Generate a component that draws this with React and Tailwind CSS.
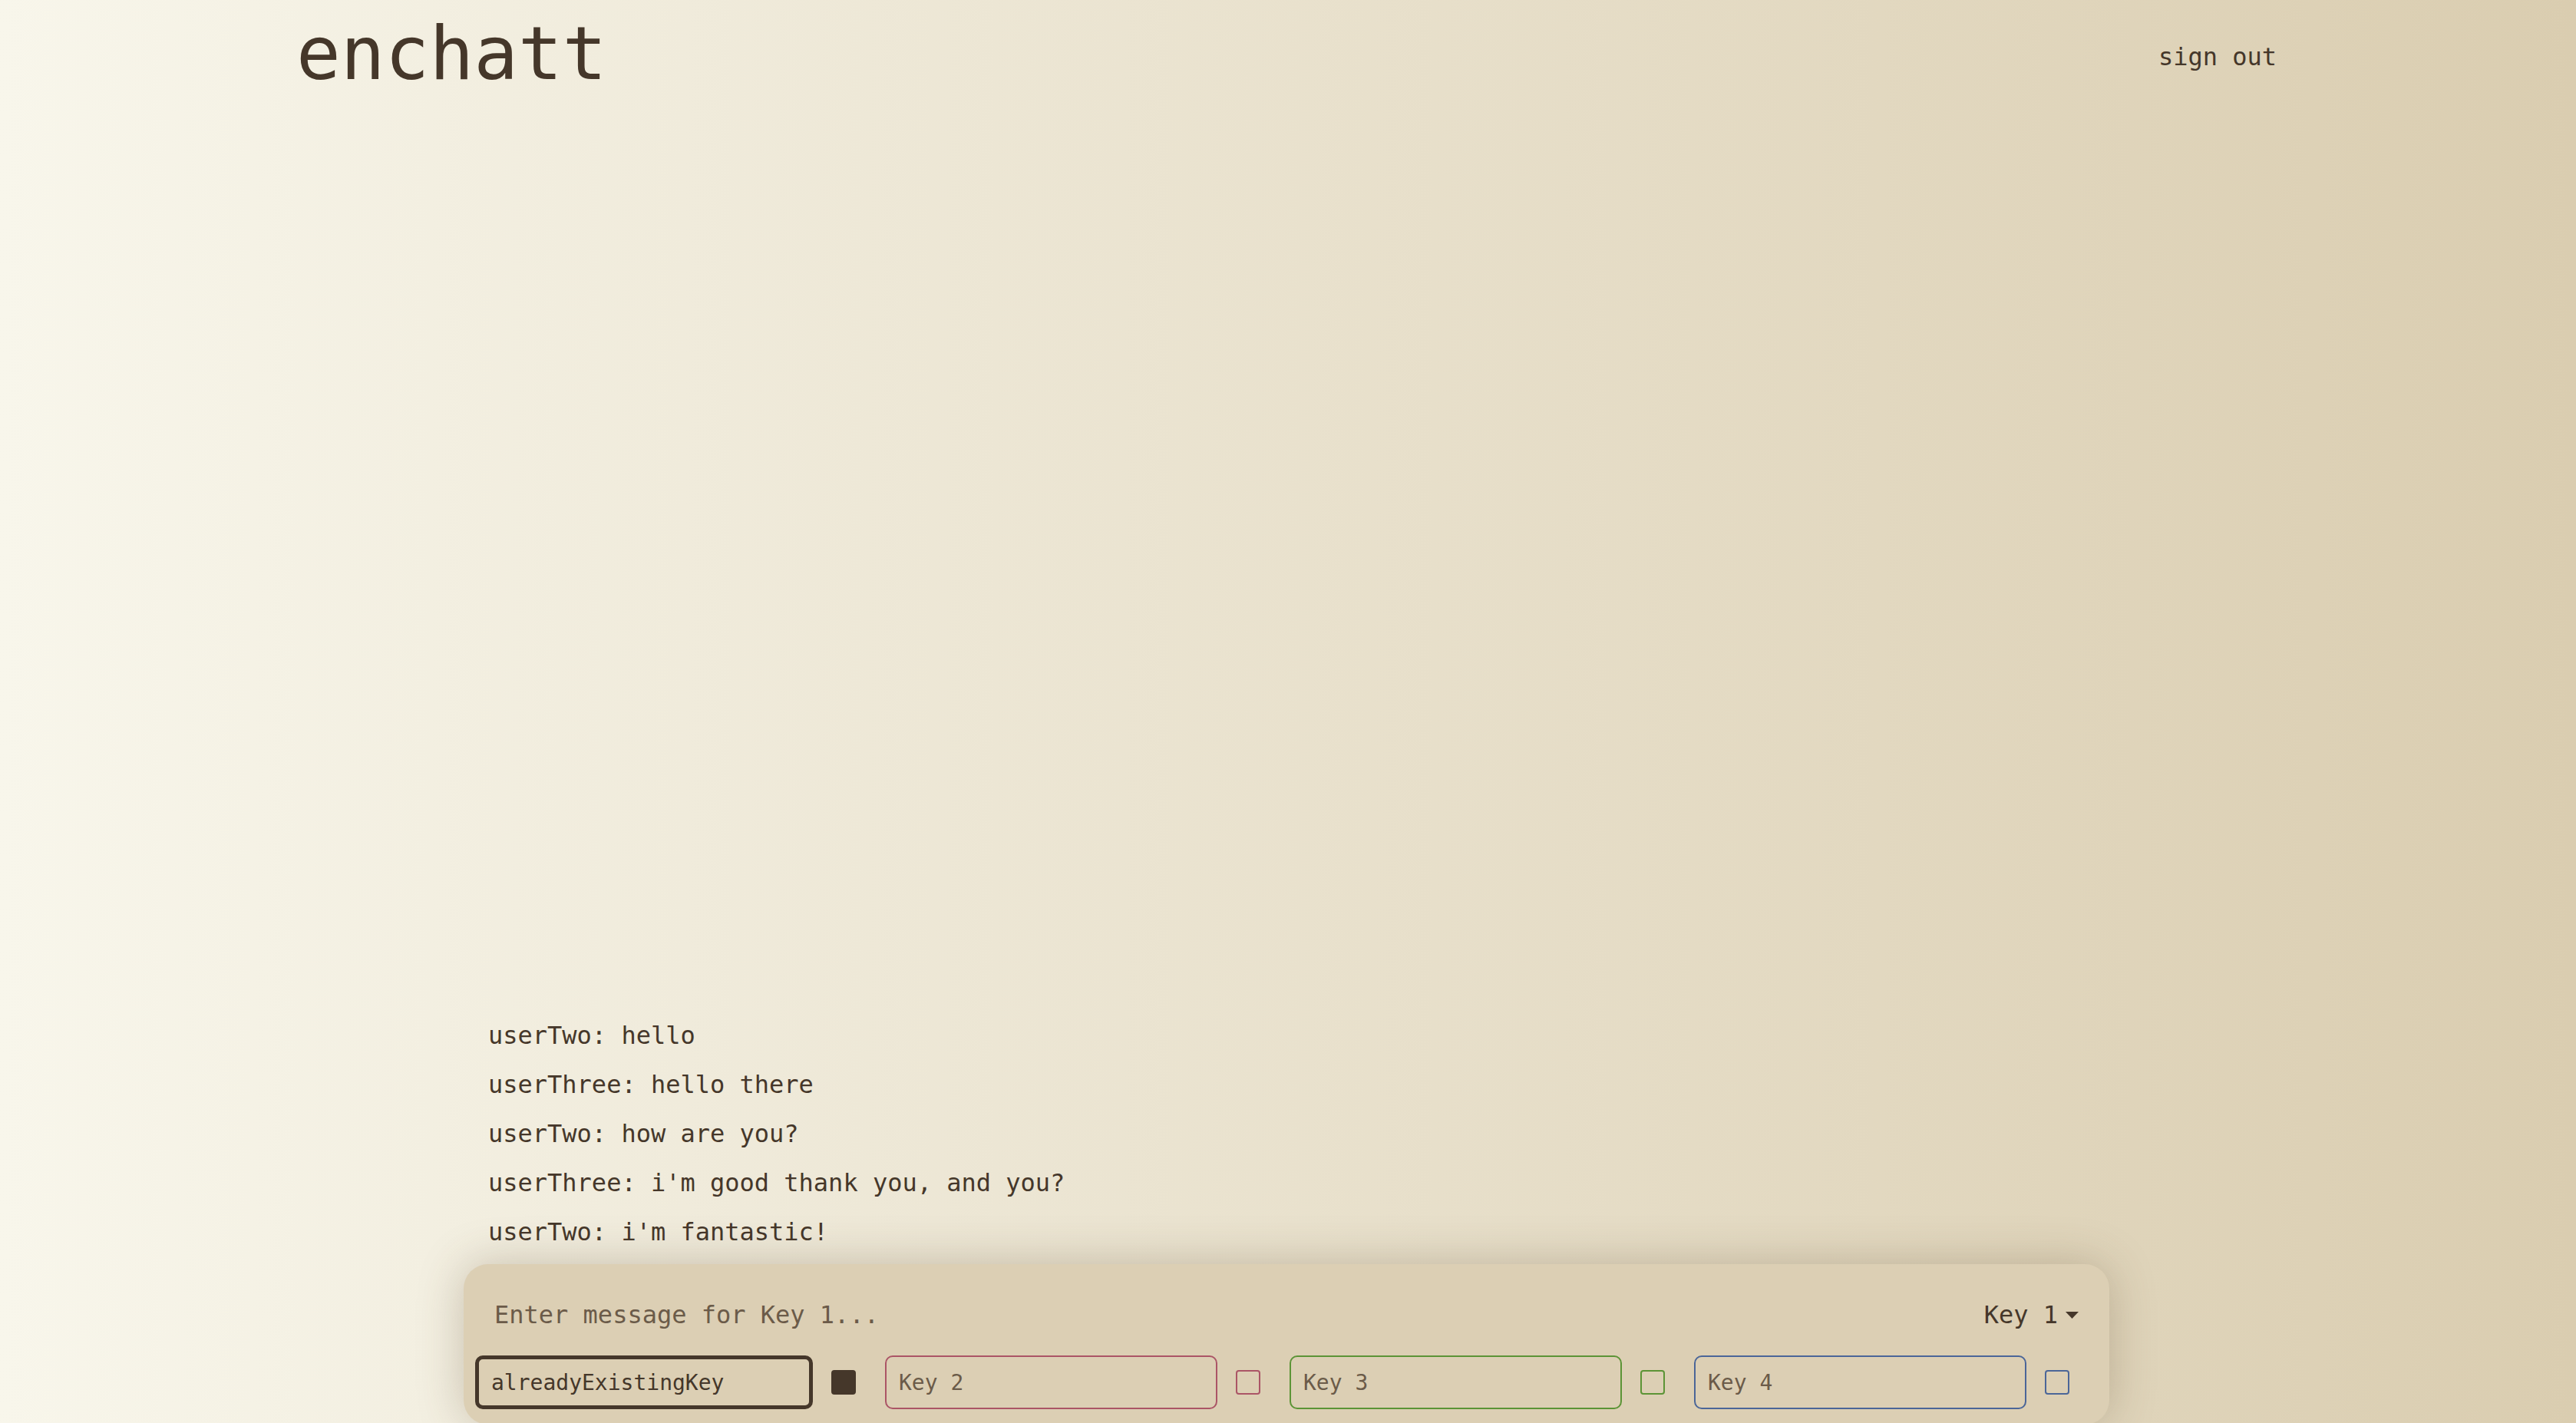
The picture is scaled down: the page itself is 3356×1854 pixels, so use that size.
import React from "react";

const mono = { fontFamily: '"DejaVu Sans Mono", "Liberation Mono", monospace' };

const messages = [
  ["userTwo", "hello"],
  ["userThree", "hello there"],
  ["userTwo", "how are you?"],
  ["userThree", "i'm good thank you, and you?"],
  ["userTwo", "i'm fantastic!"],
];

const keys = [
  { value: "alreadyExistingKey", placeholder: "Key 1", box: "w-[440px] border-[5px] border-[#45372a]", check: "bg-[#45372a] border-[#45372a]" },
  { value: "", placeholder: "Key 2", box: "w-[433px] border-2 border-[#ab5566]", check: "border-[#ab5566]" },
  { value: "", placeholder: "Key 3", box: "w-[433px] border-2 border-[#5c9436]", check: "border-[#5c9436]" },
  { value: "", placeholder: "Key 4", box: "w-[433px] border-2 border-[#4b6698]", check: "border-[#4b6698]" },
];

export default function App() {
  return (
    <div
      className="h-screen overflow-hidden bg-gradient-to-r from-[#f8f6eb] to-[#dacdb0] text-[#45372a]"
      style={mono}
    >
      <div className="w-[3352px] h-full flex flex-col">
        {/* Header */}
        <header className="w-[2580px] mx-auto pt-[22px] flex items-start justify-between">
          <h1 className="text-[96px] leading-none">enchatt</h1>
          <button className="text-[32px] leading-none mt-[36px]">sign out</button>
        </header>

        {/* Chat */}
        <main className="flex-1 flex flex-col justify-end w-[2144px] mx-auto">
          <div className="px-[32px] pb-[10px]">
            {messages.map(([user, text], i) => (
              <div key={i} className="text-[32px] leading-[64px]">
                {user}: {text}
              </div>
            ))}
          </div>

          <div className="bg-[#dccfb4] rounded-[32px] pt-[22px] pb-[20px] mb-[-2px] shadow-[0_0_60px_rgba(90,70,40,0.28)]">
            <div className="h-[88px] px-[40px] flex items-center justify-between">
              <input
                className="flex-1 bg-transparent outline-none text-[32px] placeholder-[#6b5b49]"
                placeholder="Enter message for Key 1..."
                style={mono}
              />
              <div className="flex items-center gap-[10px] text-[32px]">
                <span>Key 1</span>
                <svg width="17" height="9" viewBox="0 0 17 9">
                  <path d="M0 0 H17 L8.5 9 Z" fill="#45372a" />
                </svg>
              </div>
            </div>

            <div className="mt-[9px] pl-[15px] flex items-center">
              {keys.map((k, i) => (
                <div key={i} className="flex items-center gap-[24px] mr-[38px]">
                  <input
                    className={`h-[70px] rounded-[10px] bg-transparent px-[16px] text-[28px] outline-none placeholder-[#6b5b49] ${k.box}`}
                    placeholder={k.placeholder}
                    defaultValue={k.value}
                    style={mono}
                  />
                  <div className={`w-[32px] h-[32px] rounded-[4px] border-2 ${k.check}`} />
                </div>
              ))}
            </div>
          </div>
        </main>
      </div>
    </div>
  );
}
